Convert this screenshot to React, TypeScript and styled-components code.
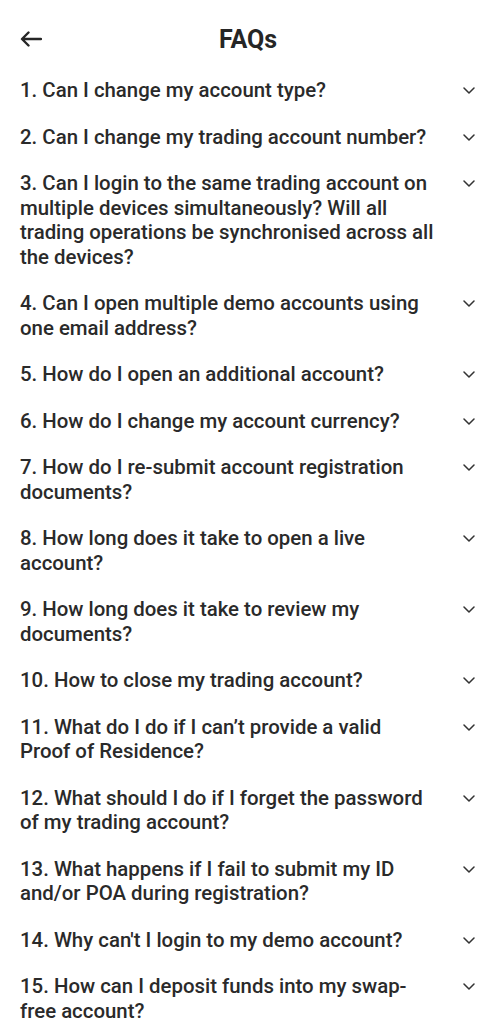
import React, { useState } from 'react'
import styled, { createGlobalStyle } from 'styled-components'

const GlobalStyle = createGlobalStyle`
  html, body {
    margin: 0;
    padding: 0;
    background: #ffffff;
  }
  body {
    font-family: Roboto, 'Noto Sans', 'Liberation Sans', sans-serif;
    color: #2a2a2a;
    -webkit-font-smoothing: antialiased;
  }
`

const Page = styled.div`
  width: 496px;
  min-height: 1024px;
  background: #ffffff;
  display: flex;
  flex-direction: column;
`

const Header = styled.header`
  height: 56px;
  padding-top: 11px;
  display: grid;
  grid-template-columns: 64px 1fr 64px;
  align-items: center;
  box-sizing: content-box;
`

const BackButton = styled.button`
  border: none;
  background: none;
  padding: 0 0 0 20px;
  height: 56px;
  display: flex;
  align-items: center;
  cursor: pointer;
  color: #262626;
`

const Title = styled.h1`
  margin: 0;
  text-align: center;
  font-size: 25px;
  font-weight: 700;
  color: #262626;
`

const List = styled.ul`
  list-style: none;
  margin: 0;
  padding: 0;
`

const Item = styled.li`
  display: flex;
  align-items: flex-start;
  gap: 21px;
  padding: 11px 15px 11px 20px;
  cursor: pointer;
`

const Question = styled.span`
  flex: 1;
  font-size: 20.4px;
  line-height: 24.5px;
  font-weight: 500;
  color: #2a2a2a;
`

const Chevron = styled.span<{ open: boolean }>`
  width: 24px;
  height: 24px;
  padding-top: 1px;
  box-sizing: border-box;
  flex-shrink: 0;
  display: flex;
  align-items: center;
  justify-content: center;
  color: #333333;
  transform: rotate(${p => (p.open ? '180deg' : '0deg')});
`

const questions = [
  '1. Can I change my account type?',
  '2. Can I change my trading account number?',
  '3. Can I login to the same trading account on multiple devices simultaneously? Will all trading operations be synchronised across all the devices?',
  '4. Can I open multiple demo accounts using one email address?',
  '5. How do I open an additional account?',
  '6. How do I change my account currency?',
  '7. How do I re-submit account registration documents?',
  '8. How long does it take to open a live account?',
  '9. How long does it take to review my documents?',
  '10. How to close my trading account?',
  '11. What do I do if I can\u2019t provide a valid Proof of Residence?',
  '12. What should I do if I forget the password of my trading account?',
  '13. What happens if I fail to submit my ID and/or POA during registration?',
  "14. Why can't I login to my demo account?",
  '15. How can I deposit funds into my swap-free account?'
]

const BackArrow = () => (
  <svg width="22" height="16" viewBox="0 0 22 16" fill="none">
    <path d="M21 8H2.5M8.5 1.5L2 8l6.5 6.5" stroke="currentColor" strokeWidth="2.4" strokeLinecap="round" strokeLinejoin="round" />
  </svg>
)

const ChevronDown = () => (
  <svg width="12" height="7" viewBox="0 0 12 7" fill="none">
    <path d="M1 1l5 5 5-5" stroke="currentColor" strokeWidth="1.5" strokeLinecap="round" strokeLinejoin="round" />
  </svg>
)

export default function App() {
  const [open, setOpen] = useState<number | null>(null)

  return (
    <>
      <GlobalStyle />
      <Page>
        <Header>
          <BackButton aria-label="Back">
            <BackArrow />
          </BackButton>
          <Title>FAQs</Title>
          <span />
        </Header>
        <List>
          {questions.map((q, i) => (
            <Item key={i} onClick={() => setOpen(open === i ? null : i)}>
              <Question>{q}</Question>
              <Chevron open={open === i}>
                <ChevronDown />
              </Chevron>
            </Item>
          ))}
        </List>
      </Page>
    </>
  )
}
